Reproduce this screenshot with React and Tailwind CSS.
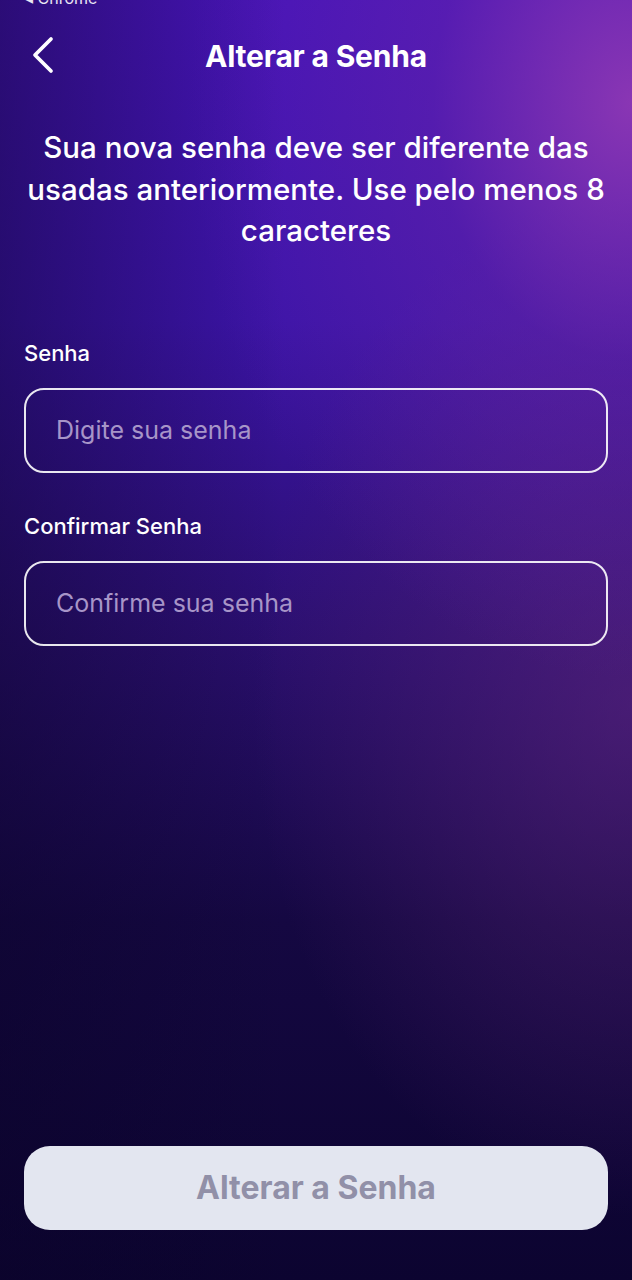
import React from 'react'
import { ChevronLeft } from 'lucide-react'

const Field = ({ label, placeholder }) => (
  <div className="flex flex-col">
    <label className="text-[22px] font-medium text-white leading-none mb-[24px]">{label}</label>
    <input
      type="password"
      placeholder={placeholder}
      className="h-[85px] w-full rounded-[20px] border-2 border-white/90 bg-transparent px-[30px] text-[25px] text-white placeholder:text-[#a795c8] outline-none"
    />
  </div>
)

export default function App() {
  return (
    <div
      className="relative min-h-[1280px] w-full overflow-hidden flex flex-col px-[24px] font-['Inter',sans-serif] bg-[radial-gradient(ellipse_70%_45%_at_100%_8%,rgba(150,60,180,0.85)_0%,rgba(110,40,170,0.4)_45%,rgba(0,0,0,0)_100%),radial-gradient(ellipse_60%_40%_at_100%_55%,rgba(100,40,130,0.55)_0%,rgba(0,0,0,0)_100%),linear-gradient(180deg,#4714b8_0%,#3c14a8_25%,#2a0f6e_50%,#150842_72%,#0c0430_100%)]"
    >
      {/* left-side shading */}
      <div className="pointer-events-none absolute inset-0 bg-[linear-gradient(90deg,rgba(10,3,40,0.45)_0%,rgba(10,3,40,0)_45%)]" />

      <div className="relative flex flex-col flex-1">
        <div className="-mt-[10px] h-[14px] text-[16px] leading-none text-white/90 pl-[1px]">◂ Chrome</div>

        {/* header */}
        <div className="relative mt-[34px] flex h-[36px] items-center justify-center">
          <button className="absolute -left-[13px] -top-[15px] text-white">
            <ChevronLeft size={64} strokeWidth={1.4} />
          </button>
          <h1 className="text-[30px] font-bold text-white tracking-[-0.2px]">Alterar a Senha</h1>
        </div>

        <p className="mt-[53px] -mx-[6px] text-center text-[29.5px] font-medium leading-[41.5px] text-white">
          Sua nova senha deve ser diferente das usadas anteriormente. Use pelo menos 8 caracteres
        </p>

        <div className="mt-[90px] flex flex-col gap-[42px]">
          <Field label="Senha" placeholder="Digite sua senha" />
          <Field label="Confirmar Senha" placeholder="Confirme sua senha" />
        </div>

        <div className="flex-1" />

        <button className="mb-[50px] h-[84px] w-full rounded-[26px] bg-[#e3e6f0] text-[32px] font-bold text-[#9190a8]">
          Alterar a Senha
        </button>
      </div>
    </div>
  )
}
